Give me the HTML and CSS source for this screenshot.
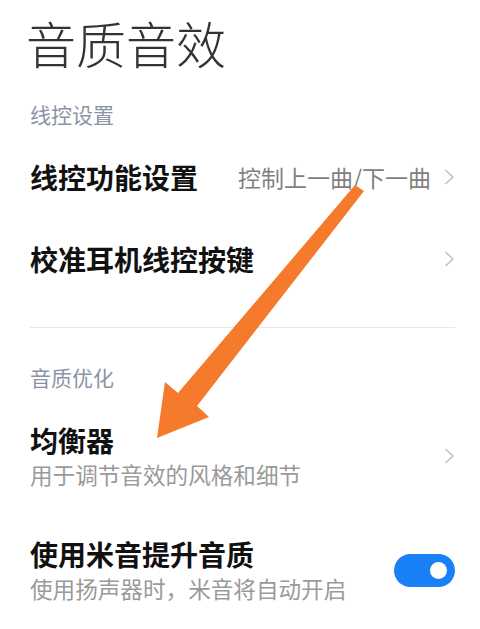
FILE: index.html
```html
<!DOCTYPE html>
<html lang="zh-CN">
<head>
<meta charset="utf-8">
<title>音质音效</title>
<link rel="stylesheet" href="styles.css">
</head>
<body>
<div class="page">
  <h1 class="title">音质音效</h1>

  <div class="group-label">线控设置</div>
  <div class="row">
    <div class="row-title">线控功能设置</div>
    <div class="row-value">控制上一曲/下一曲</div>
    <svg class="chevron" width="11" height="20" viewBox="0 0 11 20"><path d="M1.5 3 L9 10 L1.5 17" fill="none" stroke="#bdbdbd" stroke-width="1.4"/></svg>
  </div>
  <div class="row">
    <div class="row-title">校准耳机线控按键</div>
    <svg class="chevron" width="11" height="20" viewBox="0 0 11 20"><path d="M1.5 3 L9 10 L1.5 17" fill="none" stroke="#bdbdbd" stroke-width="1.4"/></svg>
  </div>

  <div class="divider"></div>

  <div class="group-label group-label-second">音质优化</div>
  <div class="row row-two">
    <div class="row-text">
      <div class="row-title row-title-two">均衡器</div>
      <div class="row-sub">用于调节音效的风格和细节</div>
    </div>
    <svg class="chevron" width="11" height="20" viewBox="0 0 11 20"><path d="M1.5 3 L9 10 L1.5 17" fill="none" stroke="#bdbdbd" stroke-width="1.4"/></svg>
  </div>
  <div class="row row-two">
    <div class="row-text">
      <div class="row-title row-title-two">使用米音提升音质</div>
      <div class="row-sub">使用扬声器时，米音将自动开启</div>
    </div>
    <div class="toggle"><div class="knob"></div></div>
  </div>

  <svg class="arrow" width="480" height="629" viewBox="0 0 480 629">
    <polygon points="355,185 364,191 197,406 209,417 157,438 165,382 178,393" fill="#f57a2b"/>
  </svg>
</div>
</body>
</html>
```
FILE: styles.css
```css
html, body {
  margin: 0;
  padding: 0;
  background: #ffffff;
}
body {
  font-family: "Noto Sans CJK SC", "Noto Sans", sans-serif;
}
.page {
  position: relative;
  width: 480px;
  height: 629px;
  box-sizing: border-box;
  padding: 17px 25px 0 30px;
  overflow: hidden;
}
.title {
  margin: 0 0 0 -4px;
  font-size: 50px;
  line-height: 50px;
  font-weight: 300;
  color: #333333;
}
.group-label {
  margin-top: 32px;
  margin-bottom: 7px;
  font-size: 21px;
  line-height: 30px;
  color: #8c93a8;
}
.group-label-second {
  margin-top: 34px;
}
.row {
  display: flex;
  align-items: center;
  height: 82px;
}
.row-two {
  height: auto;
  padding: 22.5px 0;
}
.row-text {
  flex: 1;
  min-width: 0;
}
.row-title {
  flex: 1;
  font-size: 28px;
  line-height: 40px;
  font-weight: 700;
  color: #111111;
}
.row-title-two {
  line-height: 37px;
}
.row-sub {
  font-size: 22.6px;
  line-height: 32px;
  color: #9a9a9a;
}
.row-value {
  font-size: 23px;
  line-height: 40px;
  color: #808080;
  margin-right: 13px;
}
.chevron {
  flex: none;
  display: block;
}
.divider {
  height: 1px;
  background: #e8e8e8;
  margin-top: 27px;
}
.toggle {
  flex: none;
  width: 61px;
  height: 33px;
  border-radius: 17px;
  background: #1a80f6;
  display: flex;
  align-items: center;
  justify-content: flex-end;
  padding-right: 8px;
  box-sizing: border-box;
}
.knob {
  width: 17px;
  height: 17px;
  border-radius: 50%;
  background: #ffffff;
}
.arrow {
  position: absolute;
  left: 0;
  top: 0;
  pointer-events: none;
}
```
